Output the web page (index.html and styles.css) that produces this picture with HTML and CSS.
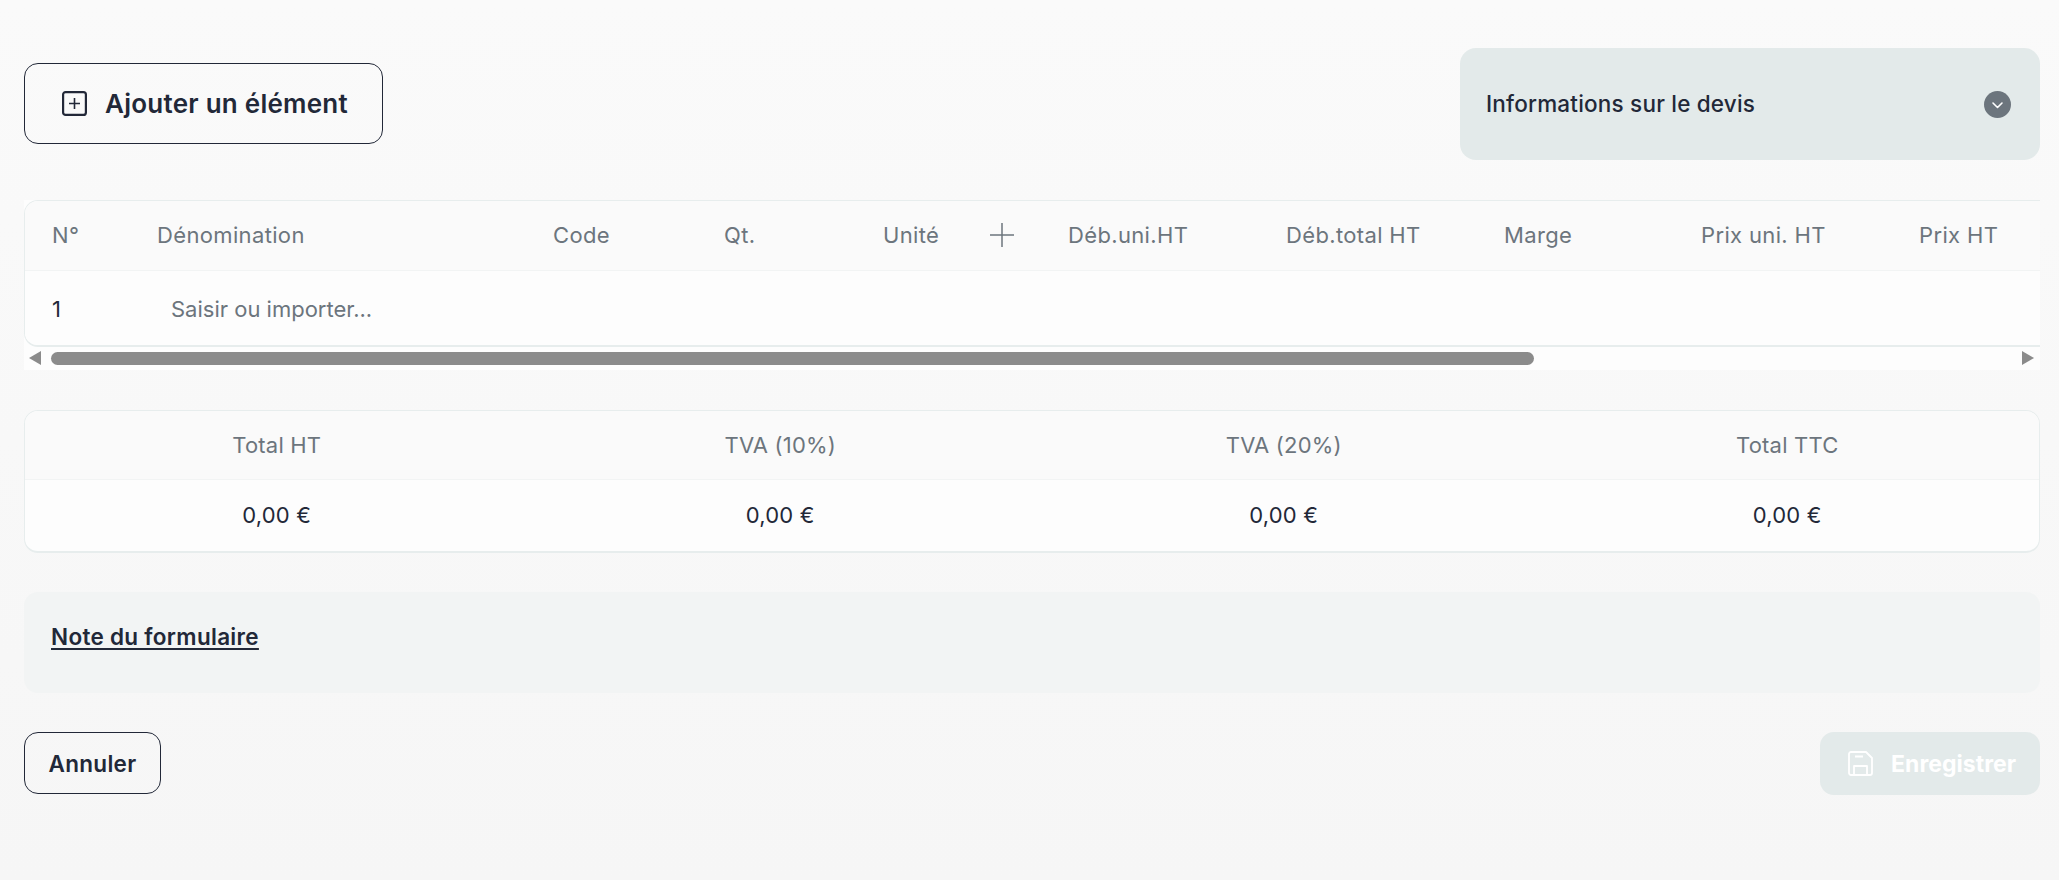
FILE: index.html
```html
<!DOCTYPE html>
<html lang="fr">
<head>
<meta charset="utf-8">
<title>Devis</title>
<link rel="stylesheet" href="styles.css">
</head>
<body>
<main class="page">
  <div class="top-row">
    <button class="btn btn-add" type="button">
      <svg class="icon-add" viewBox="0 0 25 25" width="25" height="25" fill="none" stroke="currentColor" stroke-width="2.2"><rect x="1.100" y="1.100" width="22.800" height="22.800" rx="2.5"/><path stroke-width="1.6" d="M12.5 7v11M7 12.500h11"/></svg>
      <span>Ajouter un élément</span>
    </button>
    <div class="info-box">
      <span class="info-label">Informations sur le devis</span>
      <span class="chevron"><svg viewBox="0 0 27 27" width="27" height="27" fill="none" stroke="#fff" stroke-width="1.6" stroke-linecap="round" stroke-linejoin="round"><path d="M9 12l4.500 4.500L18 12"/></svg></span>
    </div>
  </div>

  <section class="table-wrap">
    <div class="table-card">
      <div class="grid-row head-row">
        <div>N°</div><div>Dénomination</div><div>Code</div><div>Qt.</div><div>Unité</div>
        <div class="plus-cell"><svg viewBox="0 0 26 26" width="26" height="26" fill="none" stroke="#6c757d" stroke-width="1.5"><path d="M13 1v24M1 13h24"/></svg></div>
        <div>Déb.uni.HT</div><div>Déb.total HT</div><div>Marge</div><div>Prix uni. HT</div><div>Prix HT</div>
      </div>
      <div class="grid-row body-row">
        <div class="num">1</div><div class="placeholder">Saisir ou importer...</div>
      </div>
    </div>
    <div class="scrollbar">
      <span class="arrow arrow-left"></span>
      <div class="track"><div class="thumb"></div></div>
      <span class="arrow arrow-right"></span>
    </div>
  </section>

  <section class="totals">
    <div class="totals-row totals-head"><div>Total HT</div><div>TVA (10%)</div><div>TVA (20%)</div><div>Total TTC</div></div>
    <div class="totals-row totals-body"><div>0,00 €</div><div>0,00 €</div><div>0,00 €</div><div>0,00 €</div></div>
  </section>

  <section class="note"><a class="note-link" href="#">Note du formulaire</a></section>

  <div class="actions">
    <button class="btn btn-cancel" type="button">Annuler</button>
    <button class="btn-save" type="button">
      <svg viewBox="0 0 25 25" width="25" height="25" fill="none" stroke="#fff" stroke-width="1.8" stroke-linejoin="round"><path d="M3 1h15l6 6v15a2 2 0 0 1-2 2H3a2 2 0 0 1-2-2V3a2 2 0 0 1 2-2z"/><path d="M6 24V15h13v9M7 5.500h8"/></svg>
      <span>Enregistrer</span>
    </button>
  </div>
</main>
</body>
</html>
```
FILE: styles.css
```css
* { box-sizing: border-box; }
html, body { margin: 0; height: 100%; }
body {
  background: linear-gradient(#fafafa, #f6f6f6);
  font-family: Inter, "Liberation Sans", sans-serif;
  color: #222838;
  overflow: hidden;
}
.page { padding: 48px 19px 0 24px; }
.top-row { display: flex; justify-content: space-between; align-items: center; height: 112px; }
.btn { background: transparent; border: 1px solid #222838; color: #222838; font-family: inherit; }
.btn-add {
  display: flex; align-items: center; gap: 18px;
  width: 359px; height: 81px; margin-bottom: 1px; padding: 0 0 0 37px;
  border-radius: 14px; font-size: 26px; font-weight: 600; letter-spacing: 0.25px;
}
.icon-add { flex: none; }
.info-box {
  width: 580px; height: 112px; border-radius: 16px; background: #e3eaea;
  display: flex; align-items: center; justify-content: space-between;
  padding: 0 29px 0 26px; font-size: 22.5px; font-weight: 500; letter-spacing: 0.2px;
}
.info-label { margin-bottom: 1px; }
.chevron { width: 27px; height: 27px; border-radius: 50%; background: #6c757d; display: flex; }

.table-wrap { margin-top: 40px; background: #fdfdfd; }
.table-card {
  border: 1px solid #e7eded; border-right: 0; border-width: 1px 0 2px 1px;
  border-radius: 14px 0 0 14px; overflow: hidden; height: 147px;
}
.grid-row {
  display: grid;
  grid-template-columns: 105px 396px 171px 159px 133px 52px 218px 218px 197px 218px 149px;
  align-items: center;
}
.grid-row > div { padding-left: 27px; white-space: nowrap; }
.head-row {
  height: 70px; padding-bottom: 2px; background: #fafafa; border-bottom: 1px solid #f2f4f4;
  color: #6c757d; font-size: 22px; letter-spacing: 0.35px;
}
.grid-row > .plus-cell { padding-left: 0; display: flex; }
.body-row { height: 75px; background: #fdfdfd; font-size: 22px; color: #6c757d; }
.body-row .num { color: #222838; }
.body-row > .placeholder { padding-left: 41px; grid-column: span 3; }

.scrollbar { height: 24px; display: flex; align-items: center; padding: 0 6px 0 5px; gap: 10px; margin-top: -1px; }
.arrow { width: 0; height: 0; border-style: solid; flex: none; }
.arrow-left { border-width: 7px 12px 7px 0; border-color: transparent #8b8b8b transparent transparent; }
.arrow-right { border-width: 7px 0 7px 12px; border-color: transparent transparent transparent #8b8b8b; }
.track { flex: 1; height: 13px; }
.thumb { width: 1483px; height: 13px; border-radius: 7px; background: #8b8b8b; }

.totals {
  margin-top: 40px; height: 143px; border: 1px solid #e7eded; border-bottom-width: 2px;
  border-radius: 14px; overflow: hidden; background: #fdfdfd;
}
.totals-row { display: grid; grid-template-columns: repeat(4, 1fr); align-items: center; text-align: center; font-size: 22px; letter-spacing: 0.2px; }
.totals-head { height: 69px; background: #fafafa; border-bottom: 1px solid #f2f4f4; color: #6c757d; }
.totals-body { height: 70px; font-weight: 400; }

.note {
  margin-top: 39px; height: 101px; border-radius: 14px; background: #f2f4f4;
  padding: 31px 27px 0;
}
.note-link { color: #222838; font-size: 22.5px; font-weight: 600; letter-spacing: 0.3px; text-decoration: underline; text-underline-offset: 3px; text-decoration-thickness: 2px; }

.actions { margin-top: 39px; display: flex; justify-content: space-between; align-items: flex-start; }
.btn-cancel { width: 137px; height: 62px; border-radius: 14px; font-size: 22.5px; font-weight: 600; letter-spacing: 0.3px; padding: 0; }
.btn-save {
  display: flex; align-items: center; gap: 18px;
  width: 220px; height: 63px; padding: 0 0 0 28px; border: 0; border-radius: 14px;
  background: #e3eaea; color: #fff; font-family: inherit; font-size: 23px; font-weight: 700; letter-spacing: 0.05px;
}
```
